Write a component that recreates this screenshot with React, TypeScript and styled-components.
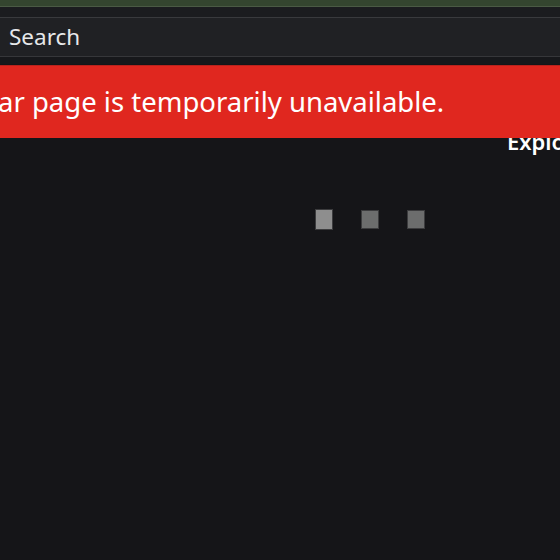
import React from "react";
import styled, { createGlobalStyle } from "styled-components";

const GlobalStyle = createGlobalStyle`
  html, body {
    margin: 0;
    padding: 0;
    background: #151518;
  }
  body {
    font-family: "Noto Sans", "Open Sans", sans-serif;
  }
`;

const Page = styled.div`
  position: relative;
  width: 560px;
  height: 560px;
  overflow: hidden;
  background: #151518;
  display: flex;
  flex-direction: column;
`;

const TopStrip = styled.div`
  height: 6px;
  background: #34452f;
  border-bottom: 1px solid #4a5a44;
`;

const NavBand = styled.div`
  height: 10px;
  background: #1b1c1f;
  border-bottom: 1px solid #393a3d;
`;

const SearchBar = styled.div`
  height: 38px;
  display: flex;
  align-items: center;
  padding-left: 9px;
  background: #202124;
  border-bottom: 1px solid #36373a;
  color: #e6e8ea;
  font-size: 22.5px;
  line-height: 22px;
`;

const Gap = styled.div`
  height: 7px;
  background: #17181b;
`;

const Content = styled.main`
  display: flex;
  flex-direction: column;
`;

const SectionTitle = styled.h2`
  margin: 66px 0 0 507px;
  font-size: 22px;
  line-height: 22px;
  font-weight: 600;
  color: #ffffff;
  white-space: nowrap;
`;

const Loader = styled.div`
  display: flex;
  align-items: center;
  gap: 28px;
  margin: 57px 0 0 315px;
`;

const Dot = styled.span<{ $active?: boolean }>`
  display: block;
  width: 18px;
  height: ${(p) => (p.$active ? "21px" : "19px")};
  box-sizing: border-box;
  background: ${(p) => (p.$active ? "#8e8e8e" : "#6c6d6d")};
  border: 1px solid #3c3c3e;
`;

const Banner = styled.div`
  position: absolute;
  top: 65px;
  left: 0;
  right: 0;
  height: 73px;
  box-sizing: border-box;
  padding-top: 22px;
  background: #e0271f;
  border-top: 1px solid #b8231d;
  color: #ffffff;
  font-size: 27.5px;
  line-height: 28px;
  white-space: nowrap;
  text-indent: -2px;
`;

export default function App() {
  return (
    <>
      <GlobalStyle />
      <Page>
        <TopStrip />
        <NavBand />
        <SearchBar>Search</SearchBar>
        <Gap />
        <Content>
          <SectionTitle>Explore</SectionTitle>
          <Loader>
            <Dot $active />
            <Dot />
            <Dot />
          </Loader>
        </Content>
        <Banner>ar page is temporarily unavailable.</Banner>
      </Page>
    </>
  );
}
